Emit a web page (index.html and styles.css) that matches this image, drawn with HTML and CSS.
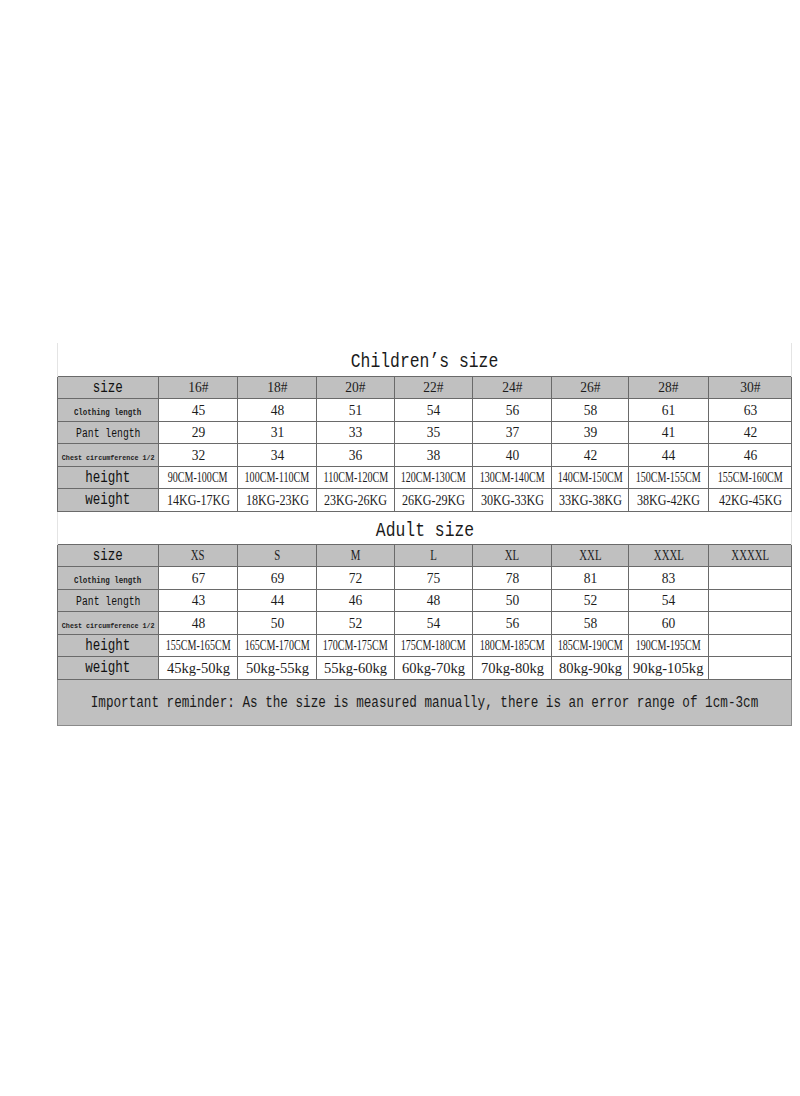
FILE: index.html
```html
<!DOCTYPE html>
<html lang="en">
<head>
<meta charset="utf-8">
<title>Size chart</title>
<link rel="stylesheet" href="styles.css">
</head>
<body>
<div class="page">
<table class="chart">
  <colgroup>
    <col class="w101"><col class="w79"><col class="w79"><col class="w78"><col class="w78"><col class="w79"><col class="w77"><col class="w80"><col class="w83">
  </colgroup>
  <tbody>
    <tr class="title"><td colspan="9"><span class="t">Children’s size</span></td></tr>
    <tr class="row head">
      <th class="lab"><span class="lb">size</span></th>
      <th><span class="hn">16#</span></th><th><span class="hn">18#</span></th><th><span class="hn">20#</span></th><th><span class="hn">22#</span></th><th><span class="hn">24#</span></th><th><span class="hn">26#</span></th><th><span class="hn">28#</span></th><th><span class="hn">30#</span></th>
    </tr>
    <tr class="row">
      <th class="lab"><span class="ls">Clothing length</span></th>
      <td><span class="n">45</span></td><td><span class="n">48</span></td><td><span class="n">51</span></td><td><span class="n">54</span></td><td><span class="n">56</span></td><td><span class="n">58</span></td><td><span class="n">61</span></td><td><span class="n">63</span></td>
    </tr>
    <tr class="row">
      <th class="lab"><span class="lm">Pant length</span></th>
      <td><span class="n">29</span></td><td><span class="n">31</span></td><td><span class="n">33</span></td><td><span class="n">35</span></td><td><span class="n">37</span></td><td><span class="n">39</span></td><td><span class="n">41</span></td><td><span class="n">42</span></td>
    </tr>
    <tr class="row">
      <th class="lab"><span class="lxs">Chest circumference 1/2</span></th>
      <td><span class="n">32</span></td><td><span class="n">34</span></td><td><span class="n">36</span></td><td><span class="n">38</span></td><td><span class="n">40</span></td><td><span class="n">42</span></td><td><span class="n">44</span></td><td><span class="n">46</span></td>
    </tr>
    <tr class="row">
      <th class="lab"><span class="lb">height</span></th>
      <td><span class="cm">90CM-100CM</span></td><td><span class="cm">100CM-110CM</span></td><td><span class="cm">110CM-120CM</span></td><td><span class="cm">120CM-130CM</span></td><td><span class="cm">130CM-140CM</span></td><td><span class="cm">140CM-150CM</span></td><td><span class="cm">150CM-155CM</span></td><td><span class="cm">155CM-160CM</span></td>
    </tr>
    <tr class="row">
      <th class="lab"><span class="lb">weight</span></th>
      <td><span class="kg">14KG-17KG</span></td><td><span class="kg">18KG-23KG</span></td><td><span class="kg">23KG-26KG</span></td><td><span class="kg">26KG-29KG</span></td><td><span class="kg">30KG-33KG</span></td><td><span class="kg">33KG-38KG</span></td><td><span class="kg">38KG-42KG</span></td><td><span class="kg">42KG-45KG</span></td>
    </tr>

    <tr class="title"><td colspan="9"><span class="t">Adult size</span></td></tr>
    <tr class="row head">
      <th class="lab"><span class="lb">size</span></th>
      <th><span class="ha">XS</span></th><th><span class="ha">S</span></th><th><span class="ha">M</span></th><th><span class="ha">L</span></th><th><span class="ha">XL</span></th><th><span class="ha">XXL</span></th><th><span class="ha">XXXL</span></th><th><span class="ha">XXXXL</span></th>
    </tr>
    <tr class="row">
      <th class="lab"><span class="ls">Clothing length</span></th>
      <td><span class="n">67</span></td><td><span class="n">69</span></td><td><span class="n">72</span></td><td><span class="n">75</span></td><td><span class="n">78</span></td><td><span class="n">81</span></td><td><span class="n">83</span></td><td></td>
    </tr>
    <tr class="row">
      <th class="lab"><span class="lm">Pant length</span></th>
      <td><span class="n">43</span></td><td><span class="n">44</span></td><td><span class="n">46</span></td><td><span class="n">48</span></td><td><span class="n">50</span></td><td><span class="n">52</span></td><td><span class="n">54</span></td><td></td>
    </tr>
    <tr class="row">
      <th class="lab"><span class="lxs">Chest circumference 1/2</span></th>
      <td><span class="n">48</span></td><td><span class="n">50</span></td><td><span class="n">52</span></td><td><span class="n">54</span></td><td><span class="n">56</span></td><td><span class="n">58</span></td><td><span class="n">60</span></td><td></td>
    </tr>
    <tr class="row">
      <th class="lab"><span class="lb">height</span></th>
      <td><span class="cm">155CM-165CM</span></td><td><span class="cm">165CM-170CM</span></td><td><span class="cm">170CM-175CM</span></td><td><span class="cm">175CM-180CM</span></td><td><span class="cm">180CM-185CM</span></td><td><span class="cm">185CM-190CM</span></td><td><span class="cm">190CM-195CM</span></td><td></td>
    </tr>
    <tr class="row">
      <th class="lab"><span class="lb">weight</span></th>
      <td><span class="kgl">45kg-50kg</span></td><td><span class="kgl">50kg-55kg</span></td><td><span class="kgl">55kg-60kg</span></td><td><span class="kgl">60kg-70kg</span></td><td><span class="kgl">70kg-80kg</span></td><td><span class="kgl">80kg-90kg</span></td><td><span class="kgl">90kg-105kg</span></td><td></td>
    </tr>
    <tr class="note"><td colspan="9"><span class="rm">Important reminder: As the size is measured manually, there is an error range of 1cm-3cm</span></td></tr>
  </tbody>
</table>
</div>
</body>
</html>
```

FILE: styles.css
```css
html, body {
  margin: 0;
  padding: 0;
  background: #ffffff;
}

.page {
  padding: 343px 0 0 57px;
}

.chart {
  width: 734px;
  border-collapse: collapse;
  table-layout: fixed;
  color: #1c1c1c;
}

.w101 { width: 101px; }
.w79 { width: 79px; }
.w78 { width: 78px; }
.w77 { width: 77px; }
.w80 { width: 80px; }
.w83 { width: 83px; }

.chart td,
.chart th {
  padding: 0;
  text-align: center;
  vertical-align: middle;
  line-height: 1;
  font-weight: normal;
  white-space: nowrap;
}

.chart span {
  display: inline-block;
  white-space: nowrap;
}

/* section titles */
.title td {
  height: 33px;
  padding-top: 5px;
  box-sizing: border-box;
  border-left: 1px solid #e4e4e4;
  border-right: 1px solid #e4e4e4;
  background: #ffffff;
}

.t {
  font-family: "Liberation Mono", "DejaVu Sans Mono", monospace;
  font-size: 21px;
  transform: scaleX(0.78);
  margin: 0 -20px;
  color: #1a1a1a;
}

/* grid rows */
.row {
  height: 22.5px;
}

.row td,
.row th {
  border: 1px solid #6a6a6a;
  background: #ffffff;
}

.row.head th,
.row th.lab {
  background: #c0c0c0;
}

.lb {
  font-family: "Liberation Mono", "DejaVu Sans Mono", monospace;
  font-size: 16.5px;
  transform: scaleX(0.76);
  margin: 0 -8px;
  color: #111;
}

.lm {
  font-family: "Liberation Mono", "DejaVu Sans Mono", monospace;
  font-size: 12.5px;
  transform: scaleX(0.78);
  margin: 0 -8px;
  color: #111;
}

.ls {
  font-family: "Liberation Mono", "DejaVu Sans Mono", monospace;
  font-size: 9px;
  font-weight: bold;
  transform: scaleX(0.83);
  margin: 0 -6px;
  color: #222;
}

.lxs {
  font-family: "Liberation Mono", "DejaVu Sans Mono", monospace;
  font-size: 8px;
  font-weight: bold;
  transform: scaleX(0.84);
  margin: 0 -8px;
  color: #222;
}

.hn {
  font-family: "Liberation Serif", "DejaVu Serif", serif;
  font-size: 15px;
  transform: scaleX(0.9);
}

.ha {
  font-family: "Liberation Serif", "DejaVu Serif", serif;
  font-size: 15px;
  transform: scaleX(0.72);
  margin: 0 -6px;
}

.n {
  font-family: "Liberation Serif", "DejaVu Serif", serif;
  font-size: 15px;
  transform: scaleX(0.9);
}

.cm {
  font-family: "Liberation Serif", "DejaVu Serif", serif;
  font-size: 14px;
  transform: scaleX(0.72);
  margin: 0 -14px;
}

.kg {
  font-family: "Liberation Serif", "DejaVu Serif", serif;
  font-size: 15.5px;
  transform: scaleX(0.78);
  margin: 0 -10px;
}

.kgl {
  font-family: "Liberation Serif", "DejaVu Serif", serif;
  font-size: 15px;
  transform: scaleX(0.97);
  margin: 0 -4px;
}

/* reminder */
.note td {
  height: 45px;
  background: #c0c0c0;
  border: 1px solid #8a8a8a;
  border-top: 1px solid #6a6a6a;
}

.rm {
  font-family: "Liberation Mono", "DejaVu Sans Mono", monospace;
  font-size: 16px;
  transform: scaleX(0.79);
  margin: 0 -80px;
  color: #1a1a1a;
}
```
